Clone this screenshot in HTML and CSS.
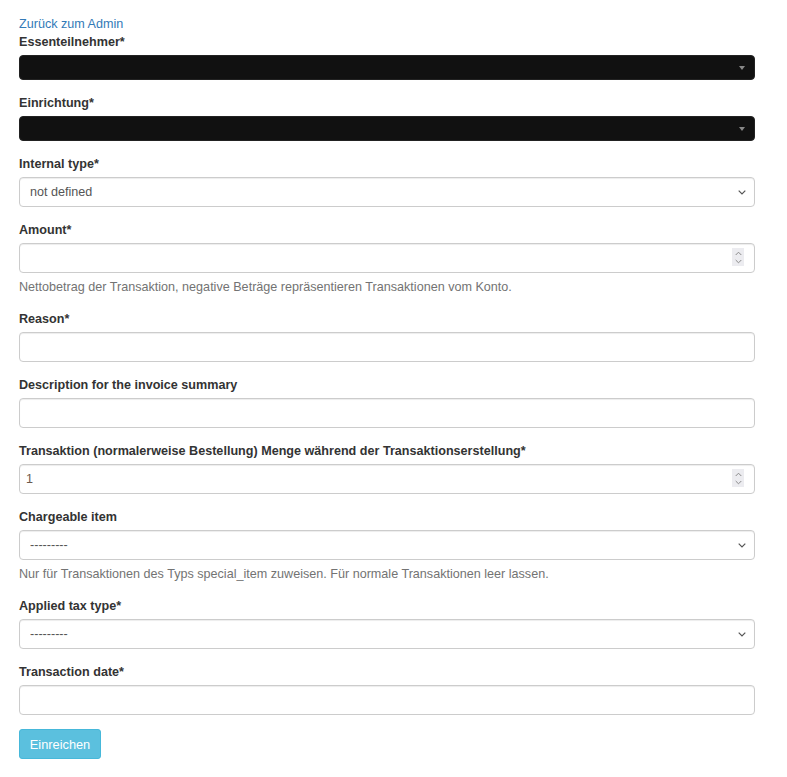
FILE: index.html
```html
<!DOCTYPE html>
<html lang="de">
<head>
<meta charset="utf-8">
<title>Transaktion</title>
<link rel="stylesheet" href="styles.css">
</head>
<body>
<div class="page">
  <a class="back" href="#">Zurück zum Admin</a>
  <form class="form">
    <div class="group">
      <label class="label">Essenteilnehmer*</label>
      <div class="dark-select"><span class="caret"></span></div>
    </div>
    <div class="group">
      <label class="label">Einrichtung*</label>
      <div class="dark-select"><span class="caret"></span></div>
    </div>
    <div class="group">
      <label class="label">Internal type*</label>
      <div class="field">
        <select class="control select"><option>not defined</option></select>
        <svg class="chevron" width="8" height="5" viewBox="0 0 8 5"><path d="M0.7 0.7 L4 4 L7.3 0.7" fill="none" stroke="#555" stroke-width="1.2"/></svg>
      </div>
    </div>
    <div class="group">
      <label class="label">Amount*</label>
      <div class="field">
        <input class="control number" type="number">
        <span class="spin"><svg width="7" height="13" viewBox="0 0 7 13"><path d="M0.7 4 L3.5 1.2 L6.3 4 M0.7 9 L3.5 11.8 L6.3 9" fill="none" stroke="#8a8a8a" stroke-width="1"/></svg></span>
      </div>
      <p class="help">Nettobetrag der Transaktion, negative Beträge repräsentieren Transaktionen vom Konto.</p>
    </div>
    <div class="group">
      <label class="label">Reason*</label>
      <input class="control" type="text">
    </div>
    <div class="group">
      <label class="label">Description for the invoice summary</label>
      <input class="control" type="text">
    </div>
    <div class="group">
      <label class="label">Transaktion (normalerweise Bestellung) Menge während der Transaktionserstellung*</label>
      <div class="field">
        <input class="control number" type="number" value="1">
        <span class="spin"><svg width="7" height="13" viewBox="0 0 7 13"><path d="M0.7 4 L3.5 1.2 L6.3 4 M0.7 9 L3.5 11.8 L6.3 9" fill="none" stroke="#8a8a8a" stroke-width="1"/></svg></span>
      </div>
    </div>
    <div class="group">
      <label class="label">Chargeable item</label>
      <div class="field">
        <select class="control select"><option>---------</option></select>
        <svg class="chevron" width="8" height="5" viewBox="0 0 8 5"><path d="M0.7 0.7 L4 4 L7.3 0.7" fill="none" stroke="#555" stroke-width="1.2"/></svg>
      </div>
      <p class="help">Nur für Transaktionen des Typs special_item zuweisen. Für normale Transaktionen leer lassen.</p>
    </div>
    <div class="group">
      <label class="label">Applied tax type*</label>
      <div class="field">
        <select class="control select"><option>---------</option></select>
        <svg class="chevron" width="8" height="5" viewBox="0 0 8 5"><path d="M0.7 0.7 L4 4 L7.3 0.7" fill="none" stroke="#555" stroke-width="1.2"/></svg>
      </div>
    </div>
    <div class="group">
      <label class="label">Transaction date*</label>
      <input class="control" type="text">
    </div>
    <button class="submit" type="button">Einreichen</button>
  </form>
</div>
</body>
</html>
```
FILE: styles.css
```css
html, body {
  margin: 0;
  padding: 0;
  background: #fff;
}
body {
  font-family: "Liberation Sans", Arial, sans-serif;
  font-size: 12.6px;
  line-height: 18px;
  color: #333;
}
.page {
  width: 736px;
  padding: 17px 0 0 19px;
}
.back {
  display: block;
  color: #337ab7;
  text-decoration: none;
  line-height: 15px;
}
.form {
  display: flex;
  flex-direction: column;
}
.group {
  display: flex;
  flex-direction: column;
  margin-bottom: 13px;
}
.label {
  font-weight: bold;
  line-height: 16px;
  padding-top: 2px;
  margin-bottom: 5px;
}
.dark-select {
  box-sizing: border-box;
  height: 25px;
  background: #111;
  border: 1px solid #222;
  border-radius: 4px;
  display: flex;
  align-items: center;
  justify-content: flex-end;
  padding-right: 9px;
}
.caret {
  width: 0;
  height: 0;
  border-style: solid;
  border-width: 4px 3px 0 3px;
  border-color: #888 transparent transparent transparent;
}
.field {
  position: relative;
}
.control {
  display: block;
  box-sizing: border-box;
  width: 100%;
  height: 30px;
  margin: 0;
  padding: 5px 10px;
  font-family: inherit;
  font-size: 12.6px;
  color: #555;
  background: #fff;
  border: 1px solid #ccc;
  border-radius: 4px;
  box-shadow: inset 0 1px 1px rgba(0,0,0,.075);
  outline: none;
}
.select {
  appearance: none;
  -webkit-appearance: none;
  padding: 5px 10px;
}
.chevron {
  position: absolute;
  right: 9px;
  top: 13px;
}
.number {
  appearance: textfield;
  -moz-appearance: textfield;
  padding: 5px 6px;
  color: #6b5a4e;
}
.number::-webkit-inner-spin-button,
.number::-webkit-outer-spin-button {
  -webkit-appearance: none;
  margin: 0;
}
.spin {
  position: absolute;
  right: 11px;
  top: 5px;
  width: 12px;
  height: 18px;
  background: #ececf0;
  display: flex;
  align-items: center;
  justify-content: center;
}
.help {
  margin: 5px 0 0;
  line-height: 17px;
  padding-top: 1px;
  color: #737373;
}
.submit {
  align-self: flex-start;
  box-sizing: border-box;
  height: 30px;
  width: 82px;
  padding: 1px 0 0;
  margin-top: 1px;
  font-family: inherit;
  font-size: 12.8px;
  color: #fff;
  background: #5bc0de;
  border: 1px solid #46b8da;
  border-radius: 3px;
}
```
